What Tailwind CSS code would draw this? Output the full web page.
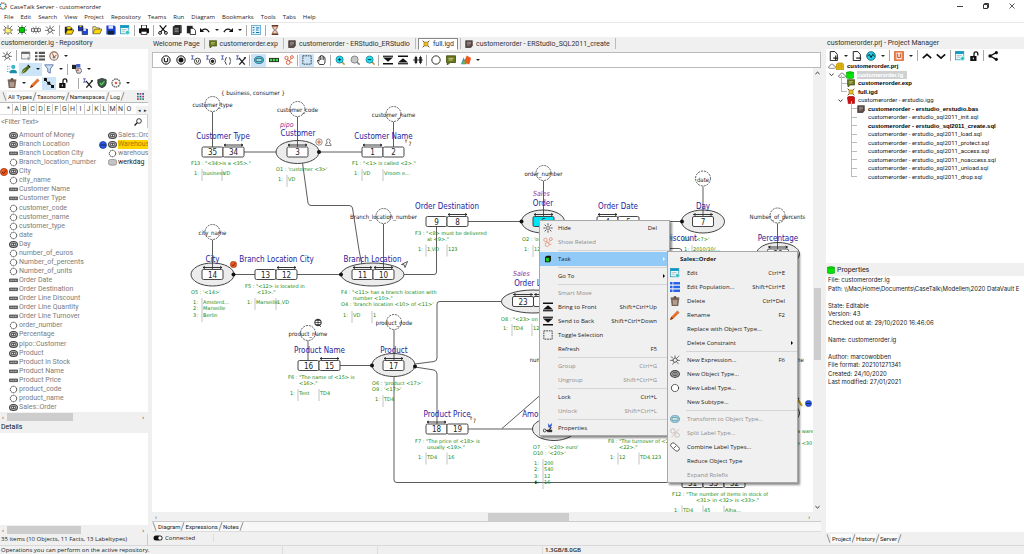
<!DOCTYPE html>
<html lang="en">
<head>
    <meta charset="UTF-8">
    <title>CaseTalk Server - customerorder</title>
    <script src="https://cdn.jsdelivr.net/npm/@tailwindcss/browser@4"></script>
</head>
<body class="h-screen flex flex-col overflow-hidden bg-[#f0f0f0] text-[#222] text-[6px] leading-[8px] font-['Open_Sans',sans-serif] whitespace-nowrap">

    <!-- icon sprite -->
    <svg class="hidden">
        <symbol id="burst" viewBox="0 0 12 12"><path d="M6 .5v2.5M6 9v2.5M.5 6H3M9 6h2.5M2 2l2 2M8 8l2 2M10 2L8 4M4 8l-2 2" stroke="#333" stroke-width="1" fill="none"/><circle cx="6" cy="6" r="1.8" fill="none" stroke="#333" stroke-width=".7"/></symbol>
        <symbol id="newfile" viewBox="0 0 12 12"><path d="M1 1l10 10M11 1L1 11M6 0v12M0 6h12" stroke="#333" stroke-width=".8"/><path d="M2.5 3.5h3l1 1h3v5h-7z" fill="#fff27a" stroke="#555" stroke-width=".7"/></symbol>
        <symbol id="newig" viewBox="0 0 12 12"><path d="M1 1l10 10M11 1L1 11M6 0v12M0 6h12" stroke="#333" stroke-width=".8"/><rect x="3" y="3" width="6" height="6" rx="1.5" fill="#0c0" stroke="#060"/></symbol>
        <symbol id="newfact" viewBox="0 0 12 12"><path d="M2 2l8 8M10 2l-8 8M6 1v10" stroke="#666" stroke-width=".7"/><rect x=".5" y="4.5" width="11" height="3" fill="#fff" stroke="#333" stroke-width=".8"/><path d="M4 4.500v3M8 4.500v3" stroke="#333"/></symbol>
        <symbol id="flash" viewBox="0 0 12 12"><path d="M4 4l-3-2M6 3.500V.5M8 4l3-3M8.500 6.500H12M8 8l2 3M5 8.500L3 11.500M3.500 6.500H0" stroke="#555" stroke-width=".9"/><rect x="3.500" y="4" width="5" height="4.500" rx="2" fill="#eee" stroke="#333" transform="rotate(-35 6 6)"/></symbol>
        <symbol id="openprj" viewBox="0 0 12 12"><path d="M1 2h4l1 1.500h4V10H1z" fill="#222"/><path d="M1.500 11L4 6h8l-2.500 5z" fill="#ffd800" stroke="#222" stroke-width=".8"/><ellipse cx="6" cy="3.500" rx="3" ry="1.800" fill="#ffd800" stroke="#222" stroke-width=".6"/></symbol>
        <symbol id="saveall" viewBox="0 0 12 12"><path d="M0 1h6v6H0z" fill="#1d36b8" stroke="#111" stroke-width=".6"/><path d="M5 5h6.500v6.500H5z" fill="#2347d8" stroke="#111" stroke-width=".7"/><path d="M6.500 5h3v2h-3z" fill="#fff"/><path d="M2 1h2v1.500H2z" fill="#ffd800"/></symbol>
        <symbol id="folder" viewBox="0 0 12 12"><path d="M1 10V2h3.500l1 1.500H9V5" fill="#ffea60" stroke="#444" stroke-width=".8"/><path d="M1 10.500L3.500 5H12l-2.500 5.500z" fill="#ffd800" stroke="#444" stroke-width=".8"/></symbol>
        <symbol id="save" viewBox="0 0 12 12"><path d="M.5 .5h9.500L11.500 2v9.500H.5z" fill="#1a3fd0"/><path d="M3 .5h5.500v4H3z" fill="#dce6ff"/><path d="M2.500 7h7v4.500h-7z" fill="#123"/></symbol>
        <symbol id="form" viewBox="0 0 12 12"><rect x=".5" y=".5" width="10" height="10" fill="#e8fbfb" stroke="#3a9fc0"/><path d="M.5 .5h10v3H.5z" fill="#0f96c5"/><path d="M2 5.500h6M2 7.500h4" stroke="#999" stroke-width=".7"/><circle cx="9" cy="9" r="2.500" fill="#2cc5c5" stroke="#fff" stroke-width=".6"/></symbol>
        <symbol id="print" viewBox="0 0 12 12"><path d="M3 0h6v5H3z" fill="#fff" stroke="#111"/><rect x="0" y="4" width="12" height="6" rx="1" fill="#111"/><path d="M2.500 7.500h7v4h-7z" fill="#fff" stroke="#111"/></symbol>
        <symbol id="cut" viewBox="0 0 12 12"><path d="M2 .5l7 8M10 .5l-7 8" stroke="#111" stroke-width="1.500"/><circle cx="2.500" cy="9.500" r="1.700" fill="none" stroke="#111" stroke-width="1.200"/><circle cx="9.500" cy="9.500" r="1.700" fill="none" stroke="#111" stroke-width="1.200"/></symbol>
        <symbol id="copy" viewBox="0 0 12 12"><path d="M3.500 .5H11v9H3.500z" fill="#555" stroke="#111"/><path d="M1.500 2H9v9.500H1.500z" fill="#333" stroke="#111"/><path d="M3 4h5M3 6h5M3 8h5" stroke="#bbb" stroke-width=".8"/></symbol>
        <symbol id="paste" viewBox="0 0 12 12"><path d="M1 1h7v9H1z" fill="#222"/><path d="M5 4h4l2.500 2.500v5H5z" fill="#fff" stroke="#111"/></symbol>
        <symbol id="undo" viewBox="0 0 12 12"><path d="M2.500 6.500Q7 2.500 11 8.500" fill="none" stroke="#111" stroke-width="1.500"/><path d="M0 3.500v5h5z" fill="#111"/></symbol>
        <symbol id="redo" viewBox="0 0 12 12"><path d="M9.500 6.500Q5 2.500 1 8.500" fill="none" stroke="#111" stroke-width="1.500"/><path d="M12 3.500v5H7z" fill="#111"/></symbol>
        <symbol id="options" viewBox="0 0 12 12"><rect x=".5" y=".5" width="11" height="11" fill="#dff3ff" stroke="#5aa7d4"/><path d="M2 3h2M2 6h2M2 9h2M6 3.500h4M6 6h3M6 9h4" stroke="#1573a8" stroke-width="1.200"/></symbol>
        <symbol id="hourglass" viewBox="0 0 12 12"><path d="M2 .7h8M2 11.300h8" stroke="#6b3a25" stroke-width="1.400"/><path d="M3 1.500h6Q9 4 6.500 6Q9 8 9 10.500H3Q3 8 5.500 6Q3 4 3 1.500z" fill="#e8cdbd" stroke="#6b3a25" stroke-width=".9"/></symbol>
        <symbol id="list" viewBox="0 0 12 12"><path d="M0 1h3v2.500H0zM0 5h3v2.500H0zM0 9h3v2.500H0zM4.500 1H12v2.500H4.500zM4.500 5H12v2.500H4.500zM4.500 9H12v2.500H4.500z" fill="#555"/></symbol>
        <symbol id="bluelist" viewBox="0 0 12 12"><path d="M0 0h3v3H0zM0 4.500h3v3H0zM0 9h3v3H0zM4 0h8v3H4zM4 4.500h8v3H4zM4 9h8v3H4z" fill="#2463ea"/></symbol>
        <symbol id="window" viewBox="0 0 12 12"><path d="M.5 1.500h10v8H.5z" fill="#f4f4f4" stroke="#777"/><path d="M.5 1h10v2.500H.5z" fill="#666"/><circle cx="9" cy="9" r="2.200" fill="#999" stroke="#fff" stroke-width=".6"/></symbol>
        <symbol id="gauge" viewBox="0 0 12 12"><circle cx="6" cy="6" r="5" fill="#f7efe8" stroke="#8a6a58" stroke-width="1.300"/><path d="M6 7L4 3M6 7l3-2" stroke="#c0431c" stroke-width="1.200"/><circle cx="6" cy="7.500" r="1.500" fill="#777"/></symbol>
        <symbol id="people" viewBox="0 0 12 12"><circle cx="7.500" cy="3.500" r="2.500" fill="#37b8c8"/><path d="M3 11q0-4 4.500-4T12 11z" fill="#188fa8"/><path d="M0 3h4M0 6h4M0 9h3" stroke="#2a7fc0" stroke-dasharray="1 1"/></symbol>
        <symbol id="pen" viewBox="0 0 12 12"><path d="M0 12L2 6.500 9 1.500 11 4 5.500 10z" fill="#4d6b14"/><path d="M0 12l5-5.500" stroke="#fff" stroke-width=".7"/><path d="M8 1l3 3" stroke="#222" stroke-width="1.500"/></symbol>
        <symbol id="filter" viewBox="0 0 12 12"><path d="M.8 1h10.400L7.500 6v5l-3-1.500V6z" fill="#cfe0f7" stroke="#4a6c9c"/></symbol>
        <symbol id="tagcopy" viewBox="0 0 12 12"><path d="M0 1h5v5H0z" fill="#222"/><path d="M5 0h5v4H5z" fill="#4762c8"/><path d="M4 5h6l2 3-2 3H6z" fill="#ddd" stroke="#333" stroke-width=".8"/><circle cx="7" cy="7.500" r="1.300" fill="#d55"/></symbol>
        <symbol id="trash" viewBox="0 0 12 12"><path d="M1.500 3.500h9l-1 8.500h-7z" fill="#8a7263" stroke="#584638" stroke-width=".7"/><path d="M.8 2.500h10.400M4.500 1h3" stroke="#584638" stroke-width="1.300"/><path d="M4.500 5v5.500M6 5v5.500M7.500 5v5.500" stroke="#e7dcd3" stroke-width=".7"/></symbol>
        <symbol id="pencil" viewBox="0 0 12 12"><path d="M0 12l1.500-4L9 .5 11.500 3 4 10.500z" fill="#e2722b"/><path d="M0 12l1.500-4L4 10.500z" fill="#7a3a12"/><path d="M8 1.500L10.500 4" stroke="#9c9c9c"/></symbol>
        <symbol id="link" viewBox="0 0 12 12"><path d="M1 2l4 4 6 4" stroke="#111" stroke-width="1.200" fill="none"/><path d="M0 0h3.500v3.500H0zM4 4.500h3.500V8H4zM8.500 8.500H12V12H8.500z" fill="#111"/></symbol>
        <symbol id="lock" viewBox="0 0 12 12"><path d="M1.500 6h7.500v6H1.500z" fill="#111"/><path d="M6 6V3.500Q6 1 8.300 1T10.600 3.500V5.500" fill="none" stroke="#111" stroke-width="1.500"/><path d="M5.200 8v2" stroke="#fff" stroke-width="1.200"/></symbol>
        <symbol id="xtool" viewBox="0 0 12 12"><path d="M0 1h3.500M1.700 1v4M0 5h3.500" stroke="#3a48a0" stroke-width=".9"/><path d="M3.500 3.500l7 8M11 3.500l-7 8" stroke="#222" stroke-width="1.600"/><path d="M9.500 3h2.500v2" stroke="#222" fill="none"/></symbol>
        <symbol id="shield" viewBox="0 0 12 12"><path d="M6 .5l5 1.500v4Q11 10 6 11.800Q1 10 1 6V2z" fill="#3c5a48" stroke="#333"/><path d="M3.500 6l2 2 3.500-4" stroke="#5ae05a" fill="none" stroke-width="1.300"/></symbol>
        <symbol id="gear" viewBox="0 0 12 12"><circle cx="6" cy="6" r="4.800" fill="#fff" stroke="#666" stroke-width="1.600" stroke-dasharray="2 .8"/><circle cx="6" cy="6" r="1.600" fill="#e06030"/></symbol>
        <symbol id="grid" viewBox="0 0 12 12"><path d="M0 0h3v3H0zM4.500 4.500h3v3h-3zM9 0h3v3H9z" fill="#285b8c"/><path d="M4.500 0h3v3h-3zM0 9h3v3H0zM9 4.500h3v3H9z" fill="#b33a6c"/><path d="M0 4.500h3v3H0zM4.500 9h3v3h-3zM9 9h3v3H9z" fill="#2a8a70"/></symbol>
        <symbol id="search" viewBox="0 0 12 12"><circle cx="7.500" cy="4.500" r="3.500" fill="#fff" stroke="#111" stroke-width="1.200"/><path d="M5 7L.8 11.200" stroke="#111" stroke-width="1.900"/></symbol>
        <symbol id="uring" viewBox="0 0 12 12"><circle cx="6" cy="6" r="5" fill="#fff" stroke="#111" stroke-width="1.200"/><path d="M4 3.500v3.500q2 2.500 4 0V3.500" fill="none" stroke="#111" stroke-width="1.300"/></symbol>
        <symbol id="dotring" viewBox="0 0 12 12"><circle cx="6" cy="6" r="5" fill="#fff" stroke="#111" stroke-width="1.200"/><circle cx="6" cy="6" r="3" fill="#111"/></symbol>
        <symbol id="tu" viewBox="0 0 12 12"><path d="M0 1h3.500M1.700 1v4M0 5h3.500" stroke="#3a48a0" stroke-width=".9"/><circle cx="7.800" cy="7.500" r="3.700" fill="#fff" stroke="#222"/><path d="M6.500 5.800v2.400q1.300 1.500 2.600 0V5.800" fill="none" stroke="#222"/></symbol>
        <symbol id="tdot" viewBox="0 0 12 12"><path d="M0 1h3.500M1.700 1v4M0 5h3.500" stroke="#3a48a0" stroke-width=".9"/><circle cx="7.800" cy="7.500" r="3.700" fill="#fff" stroke="#222"/><circle cx="7.800" cy="7.500" r="2" fill="#222"/></symbol>
        <symbol id="tbrace" viewBox="0 0 12 12"><path d="M0 1h3.500M1.700 1v4M0 5h3.500" stroke="#3a48a0" stroke-width=".9"/><path d="M7 3q-1.500 0-1.500 2t-1.200 2.500Q5.500 8 5.500 9.500T7 11.500M9.500 3Q11 3 11 5t1 2.500Q11 8 11 9.500t-1.500 2" fill="none" stroke="#222"/></symbol>
        <symbol id="objtype" viewBox="0 0 12 12"><ellipse cx="6" cy="6" rx="5.500" ry="4.200" fill="#5ac4dc" stroke="#2a6d90"/><path d="M2.500 4.300h7v3.400h-7z" fill="#9fe9f5" stroke="#244" stroke-width=".8"/></symbol>
        <symbol id="roles" viewBox="0 0 12 12"><path d="M0 3.500h12v5H0z" fill="#222"/><path d="M1 4.500h2.800v3H1zM4.600 4.500h2.800v3H4.600zM8.200 4.500H11v3H8.200z" fill="#4ad04a"/></symbol>
        <symbol id="related" viewBox="0 0 12 12"><path d="M3.500 4L6 7.500l3-4M6 8l4 1" stroke="#d44a24" stroke-width=".9" fill="none"/><circle cx="3" cy="3.500" r="2" fill="#fff" stroke="#d44a24"/><circle cx="9.500" cy="2.500" r="1.700" fill="#fff" stroke="#d44a24"/><circle cx="5" cy="9" r="2.300" fill="#fff" stroke="#d44a24"/></symbol>
        <symbol id="select" viewBox="0 0 12 12"><path d="M1 1h10v10H1z" fill="none" stroke="#222" stroke-dasharray="2 1"/></symbol>
        <symbol id="hand" viewBox="0 0 12 12"><path d="M3 11.500Q.5 8 .5 6.500q1-.8 2 1V2.500q.9-1 1.700 0V1q1-1 1.800 0V1.500q1-1 1.900 0v1.500q1-.8 1.700.2V8q0 2-1.500 3.500z" fill="#fff" stroke="#111"/><path d="M4.200 3v3M6 2v4M7.900 3v3" stroke="#111" stroke-width=".8"/></symbol>
        <symbol id="zoomin" viewBox="0 0 12 12"><path d="M8 8l3.500 3.500" stroke="#c08a30" stroke-width="1.800"/><circle cx="5.500" cy="5.500" r="4.300" fill="#22dcee" stroke="#1a8a9c"/><path d="M3.500 5.500h4M5.500 3.500v4" stroke="#123"/></symbol>
        <symbol id="zoomfit" viewBox="0 0 12 12"><path d="M8 8l3.500 3.500" stroke="#777" stroke-width="1.800"/><circle cx="5.500" cy="5.500" r="4.300" fill="#c6c6c6" stroke="#777"/></symbol>
        <symbol id="zoomout" viewBox="0 0 12 12"><path d="M8 8l3.500 3.500" stroke="#c08a30" stroke-width="1.800"/><circle cx="5.500" cy="5.500" r="4.300" fill="#22dcee" stroke="#1a8a9c"/><path d="M3.500 5.500h4" stroke="#123"/></symbol>
        <symbol id="back" viewBox="0 0 12 12"><path d="M0 1.500h12" stroke="#111" stroke-width="1.400"/><path d="M0 3h12L6 8z" fill="#111"/><path d="M0 10.500h12" stroke="#111" stroke-width="1.800"/></symbol>
        <symbol id="front" viewBox="0 0 12 12"><path d="M0 1.500h12" stroke="#111" stroke-width="1.800"/><path d="M0 9h12L6 4z" fill="#111"/><path d="M0 10.500h12" stroke="#111" stroke-width="1.400"/></symbol>
        <symbol id="align" viewBox="0 0 12 12"><path d="M2 2.500h3v7H2zM7.500 2.500h3v7h-3z" fill="#222"/><path d="M0 6h12M3.500 1v10M9 1v10" stroke="#222"/></symbol>
        <symbol id="ring" viewBox="0 0 12 12"><circle cx="6" cy="6" r="5" fill="#fff" stroke="#222" stroke-width="1.100"/></symbol>
        <symbol id="dashring" viewBox="0 0 12 12"><circle cx="6" cy="6" r="4.300" fill="#fff" stroke="#222" stroke-width="1.200" stroke-dasharray="2 .7"/></symbol>
        <symbol id="note" viewBox="0 0 12 12"><path d="M.5 1h11v8H5l-3.500 3V9h-1z" fill="#66751f" stroke="#444d10"/><path d="M3 4h6M3 6h5" stroke="#d8e08a"/></symbol>
        <symbol id="shapes" viewBox="0 0 12 12"><path d="M0 11L3 3l4 8z" fill="#2b9ad0"/><path d="M3 9l4-8.500 5 3-2 8z" fill="#ef5a1c"/><circle cx="3.500" cy="9" r="2" fill="#6bb04a"/></symbol>
        <symbol id="script" viewBox="0 0 12 12"><path d="M1 1h10v8l-2.500 2.500H1z" fill="#5b4a46" stroke="#3f3330"/><path d="M3 3.500h6M3 5.500h6M3 7.500h4" stroke="#c9bcb8" stroke-width=".8"/></symbol>
        <symbol id="igd" viewBox="0 0 12 12"><path d="M1 1l10 10M11 1L1 11" stroke="#6e5a10" stroke-width="1.500"/><path d="M3 3h6v6H3z" fill="#f0c020" stroke="#665510" stroke-width=".7"/></symbol>
        <symbol id="app" viewBox="0 0 12 12"><circle cx="6" cy="6" r="4.500" fill="none" stroke="#c8452c" stroke-width="2.500" stroke-dasharray="2 7"/><circle cx="6" cy="6" r="4.500" fill="none" stroke="#2b7fc0" stroke-width="2.500" stroke-dasharray="2 7" stroke-dashoffset="3"/><circle cx="6" cy="6" r="4.500" fill="none" stroke="#4aa04a" stroke-width="2.500" stroke-dasharray="2 7" stroke-dashoffset="6"/></symbol>
        <symbol id="obj" viewBox="0 0 12 12"><ellipse cx="6" cy="6" rx="5.300" ry="4" fill="#bbb" stroke="#444" stroke-width="1.400"/><path d="M3.500 4.500h5v3h-5z" fill="#eee" stroke="#333"/><path d="M6 4.500v3" stroke="#333"/></symbol>
        <symbol id="fact" viewBox="0 0 12 12"><path d="M.5 4h11v3.500H.5z" fill="#666" stroke="#444"/><path d="M2 5.700h2M5 5.700h2M8 5.700h2" stroke="#ddd"/></symbol>
        <symbol id="pill" viewBox="0 0 12 12"><rect x=".5" y="2" width="11" height="7.500" rx="3" fill="#c4c4c4" stroke="#888"/></symbol>
        <symbol id="checkball" viewBox="0 0 12 12"><circle cx="6" cy="6" r="5.500" fill="#f2551c" stroke="#7a3010" stroke-width=".8"/><path d="M3 6l2.300 2.500L9 3.500" stroke="#5a1c00" stroke-width="1.300" fill="none"/></symbol>
        <symbol id="blueball" viewBox="0 0 12 12"><circle cx="6" cy="6" r="5.300" fill="#2858e8" stroke="#15308a"/><path d="M2 6h8" stroke="#123" stroke-width="1.400"/></symbol>
        <symbol id="docadd" viewBox="0 0 12 12"><path d="M1.500 .7H7L10 4v7.500H1.500z" fill="#fff" stroke="#222" stroke-width="1.200"/><path d="M5 8.500h6M8 5.500v6" stroke="#222" stroke-width="1.300"/></symbol>
        <symbol id="docdel" viewBox="0 0 12 12"><path d="M1.500 .7H7L10 4v7.500H1.500z" fill="#fff" stroke="#222" stroke-width="1.200"/><path d="M5 8.500h6" stroke="#222" stroke-width="1.500"/></symbol>
        <symbol id="sync" viewBox="0 0 12 12"><circle cx="6" cy="6" r="5.200" fill="#22cbe0" stroke="#0b6478"/><path d="M1.500 6.500L4 4l2 4 2-4 2.500 2.500" fill="none" stroke="#123" stroke-width="1.200"/></symbol>
        <symbol id="ubox" viewBox="0 0 12 12"><path d="M.5 .5h11v11H.5z" fill="#f08050" stroke="#d8672f"/><path d="M3 2h6v8H3z" fill="#fff"/><path d="M4.500 3v5M7.500 3v5M4.500 8h3" stroke="#b3431c" stroke-width="1.200"/></symbol>
        <symbol id="up" viewBox="0 0 12 12"><path d="M1 8.500L6 4l5 4.500" fill="none" stroke="#111" stroke-width="2"/></symbol>
        <symbol id="down" viewBox="0 0 12 12"><path d="M1 4l5 4.500L11 4" fill="none" stroke="#111" stroke-width="2"/></symbol>
        <symbol id="share" viewBox="0 0 12 12"><path d="M10 2L2.500 6l7.500 4" fill="none" stroke="#111" stroke-width="1.500"/><circle cx="10" cy="2" r="1.900" fill="#111"/><circle cx="2.500" cy="6" r="2.100" fill="#111"/><circle cx="10" cy="10" r="1.900" fill="#111"/></symbol>
        <symbol id="cloud" viewBox="0 0 12 12"><path d="M3 9.500Q.5 9.500.7 7.700T3 6Q3.500 3 6 3t3 3q2.500 0 2.500 1.800T9.500 9.500z" fill="#fff" stroke="#555"/></symbol>
        <symbol id="prj" viewBox="0 0 12 12"><path d="M0 4Q3 0 6 1.500 10 0 12 4v7.500H0z" fill="#e8bc10" stroke="#8a6d00" stroke-width=".7"/><path d="M1 5h10M1 8h10M4 2v9M8 2v9" stroke="#b58f00" stroke-width=".6"/></symbol>
        <symbol id="greendb" viewBox="0 0 12 12"><path d="M.5 2Q6-.5 11.500 2v8.500Q6 12.500.5 10.500z" fill="#00e600" stroke="#0a8a0a" stroke-width=".8"/><path d="M.5 2.500q5.500 2.300 11 0" fill="none" stroke="#0a8a0a" stroke-width=".7"/></symbol>
        <symbol id="reddb" viewBox="0 0 12 12"><path d="M.5 2L3 .5h6L11.500 2v9L9 11.800H2z" fill="#d01010" stroke="#8a0a0a" stroke-width=".8"/></symbol>
        <symbol id="cube" viewBox="0 0 12 12"><path d="M2.500 3.500L4.500 2h5v6L8 10H2.500z" fill="#111"/><path d="M3.500 4.500h4v4.500h-4z" fill="#14c814"/></symbol>
        <symbol id="props" viewBox="0 0 12 12"><path d="M6 0l2 3 2.500-3v3L8.500 5.500h-2z" fill="#2450d8"/><path d="M0 9h7l3-4" stroke="#222" stroke-width="1.300" fill="none"/><circle cx="2" cy="9" r="1.700" fill="#fff" stroke="#222"/><path d="M5 8h6v3H5z" fill="#333"/></symbol>
        <symbol id="split" viewBox="0 0 12 12"><circle cx="3.500" cy="3.500" r="2.700" fill="none" stroke="#999"/><circle cx="8.500" cy="8.500" r="2.700" fill="none" stroke="#999"/><path d="M2 11L10.500 1.500" stroke="#e08a70"/></symbol>
        <symbol id="combine" viewBox="0 0 12 12"><rect x="0" y="3.200" width="12" height="5.600" rx="2.800" transform="rotate(42 6 6)" fill="#fff" stroke="#444"/><path d="M4.500 7.500l3-3" stroke="#444"/></symbol>
        <symbol id="toggle" viewBox="0 0 20 12"><rect x="1" y="1" width="18" height="10" rx="5" fill="#111"/><circle cx="14" cy="6" r="3.500" fill="#fff"/></symbol>
    </svg>

    <!-- title bar -->
    <header class="bg-white">
        <div class="flex items-center h-3">
            <svg class="size-2 -ml-px"><use href="#app"/></svg>
            <h1 class="pl-[3px] flex-1 pt-px">CaseTalk Server - customerorder</h1>
            <div class="flex gap-[10px] pr-1">
                <button aria-label="Minimize" class="w-4 h-3 grid place-items-center"><span class="w-[6px] h-px bg-[#444]"></span></button>
                <button aria-label="Restore" class="w-4 h-3 grid place-items-center"><svg class="size-[6px]" viewBox="0 0 6 6"><path d="M.5 1.500h4v4h-4zM1.500 1.500v-1h4v4h-1" fill="none" stroke="#333"/></svg></button>
                <button aria-label="Close" class="w-4 h-3 grid place-items-center"><svg class="size-[6px]" viewBox="0 0 6 6"><path d="M.5 .5l5 5M5.500 .5l-5 5" stroke="#333" stroke-width=".8"/></svg></button>
            </div>
        </div>
        <nav id="menubar" class="flex items-center gap-[7px] pl-1 h-[11px] border-b border-[#e8e8e8]"></nav>
        <div id="main-toolbar" class="flex items-center h-[14px] pl-px"></div>
    </header>

    <main class="flex-1 min-h-0 grid grid-cols-[148px_minmax(0,1fr)_199px] gap-x-1">

        <!-- repository -->
        <section class="flex flex-col min-h-0 min-w-0 font-[Roboto,sans-serif]">
            <h2 class="text-[7px] leading-[12px] h-3 pl-px text-[#333]">customerorder.ig - Repository</h2>
            <div class="bg-white">
                <div id="repo-bar1" class="flex items-center h-[13px]"></div>
                <div id="repo-bar2" class="flex items-center h-[14px] pl-[5px]"></div>
                <div id="repo-bar3" class="flex items-center h-[14px] pl-[5px]"></div>
            </div>
            <div class="flex items-center h-3 pl-[2px]">
                <div class="slant-tabs flex flex-1 items-center" data-tabs="All Types,Taxonomy,Namespaces,Log"></div>
                <button aria-label="Columns" class="p-[2px] mr-[2px]"><svg class="size-[7px]"><use href="#grid"/></svg></button>
            </div>
            <div class="flex items-end h-3 pl-[5px] bg-white border-t border-[#bbb]">
                <div id="letters" class="flex flex-1 divide-x divide-[#ccc]"></div>
                <button aria-label="Previous letters" class="w-[6px] bg-[#f0f0f0] text-[5px]">◂</button>
                <button aria-label="Next letters" class="w-[6px] bg-[#f0f0f0] text-[5px]">▸</button>
            </div>
            <div class="flex items-center h-[14px] bg-white border-t border-[#ddd]">
                <input type="text" aria-label="Filter" placeholder="&lt;Filter Text&gt;" class="flex-1 min-w-0 pl-px text-[7px] placeholder:text-[#777] outline-none">
                <button aria-label="Search" class="w-5 h-[13px] grid place-items-center border-r border-[#ccc]"><svg class="size-2"><use href="#search"/></svg></button>
            </div>
            <div id="types" class="bg-white grid grid-flow-col grid-rows-[repeat(31,1fr)] grid-cols-[99px_minmax(0,1fr)] h-[284px] pt-[3px] text-[7px] leading-[9px] text-[#7c7c7c] overflow-hidden"></div>
            <div class="flex items-center h-[9px] px-[2px] gap-[3px] text-[6px]"><span>‹</span><span class="w-[66px] h-2 bg-[#cdcdcd]"></span><span class="ml-auto pr-[2px]">›</span></div>
            <h2 class="h-3 leading-[13px] pl-px text-[7px] text-[#111]">Details</h2>
            <div class="bg-white flex-1"></div>
            <div class="flex items-center h-[9px] px-[2px] gap-[3px] text-[6px]"><span>‹</span><span class="w-[74px] h-2 bg-[#cdcdcd]"></span><span class="ml-auto pr-[2px]">›</span></div>
            <p class="h-[11px] leading-[11px] pl-px font-['Open_Sans',sans-serif] border-r border-[#ccc]">35 items (10 Objects, 11 Facts, 13 Labeltypes)</p>
        </section>

        <!-- diagram editor -->
        <section class="flex flex-col min-h-0 min-w-0">
            <div id="doc-tabs" class="flex items-center h-[15px] pb-[2px] text-[7px] font-[Roboto,sans-serif] text-[#333]"></div>
            <div id="diagram-bar" class="flex items-center h-4 pl-[5px] bg-white border border-[#bbb]"></div>
            <div class="flex-1 min-h-0 flex">
                <div class="relative flex-1 min-w-0 bg-white overflow-hidden">
                    <svg class="size-full font-['DejaVu_Sans_Condensed','Open_Sans',sans-serif]" role="img" aria-label="Customer order information grammar"><g id="diagram" transform="translate(-152 -68)"></g></svg>
                    <div id="context-menu" role="menu" class="absolute left-[387px] top-[152px] w-[131px] bg-[#f0f0f0] border border-[#a8a8a8] shadow-[2px_2px_2px_rgba(0,0,0,0.45)]"></div>
                    <div id="task-menu" role="menu" class="absolute left-[515px] top-[183px] w-[131px] bg-[#f0f0f0] border border-[#a8a8a8] shadow-[2px_2px_2px_rgba(0,0,0,0.45)]"></div>
                </div>
                <div class="w-2 flex flex-col items-center py-[2px]">
                    <svg class="w-[5px] h-[6px]" viewBox="0 0 12 12"><use href="#up"/></svg>
                    <span class="flex-1 flex items-center pt-[68px]"><span class="w-[7px] h-[72px] bg-[#cdcdcd]"></span></span>
                    <svg class="w-[5px] h-[6px]" viewBox="0 0 12 12"><use href="#down"/></svg>
                </div>
            </div>
            <div class="flex items-center h-[9px] pl-[3px] pr-[11px]"><span>‹</span><span class="flex-1 flex justify-center pl-[91px]"><span class="w-[81px] h-2 bg-[#cdcdcd]"></span></span><span>›</span></div>
            <div class="slant-tabs flex items-center h-[10px] border-t border-[#ccc] bg-[#f7f7f7] font-[Roboto,sans-serif]" data-tabs="Diagram,Expressions,Notes"></div>
            <div class="flex items-center h-[14px] pb-[2px] border-t border-[#ddd]">
                <svg class="w-[10px] h-[6px] ml-px"><use href="#toggle"/></svg>
                <span class="pl-[2px] w-[51px] border-r border-[#ddd]">Connected</span>
            </div>
        </section>

        <!-- project manager -->
        <section class="flex flex-col min-h-0 min-w-0 font-[Roboto,sans-serif] pl-px">
            <h2 class="text-[7px] leading-[12px] h-3 pl-px text-[#333]">customerorder.prj - Project Manager</h2>
            <div id="project-bar" class="flex items-center h-[13px] pl-px bg-white"></div>
            <div class="bg-white h-[201px]"><div id="tree" class="grid auto-rows-fr h-[119px] text-[#222]"></div></div>
            <h2 class="flex items-center gap-[2px] h-[13px] pl-px text-[7px]"><svg class="size-2"><use href="#greendb"/></svg>Properties</h2>
            <div class="bg-white flex-1 pl-[2px] overflow-hidden">
                <div id="props-list" class="grid auto-rows-fr h-[111px] font-[Inter,sans-serif]"></div>
            </div>
            <div class="slant-tabs flex items-center h-[13px]" data-tabs="Project,History,Server"></div>
        </section>
    </main>

    <footer class="flex items-center h-[9px] border-t border-[#d8d8d8]">
        <span class="w-[283px] pl-px border-r border-[#ddd]">Operations you can perform on the active repository.</span>
        <span class="w-[95px] border-r border-[#ddd]">&nbsp;</span>
        <span class="w-[165px] border-r border-[#ddd]">&nbsp;</span>
        <span class="pl-[2px] font-semibold">1.3GB/8.0GB</span>
    </footer>

    <script>
    const byId = id => document.getElementById(id);
    const esc = s => s.replace(/&/g, '&amp;').replace(/</g, '&lt;').replace(/>/g, '&gt;');

    // toolbars: "|" separator, "v" drop-down arrow, "*name" pressed button
    function toolbar(id, spec, width = 'w-[14px]', gap = 'mx-[2px]') {
        byId(id).innerHTML = spec.split(' ').map(name => {
            if (name === '|') return `<span class="w-px h-[11px] ${gap} bg-[#aaa]"></span>`;
            if (name === '_') return '<span class="w-[6px]"></span>';
            const on = name[0] === '*' ? 'bg-[#cce4f7]' : '';
            name = name.replace('*', '');
            if (name === 'v') return `<button aria-label="More" class="w-[9px] h-[13px] grid place-items-center ${on}"><span class="border-x-2 border-x-transparent border-t-2 border-t-[#222]"></span></button>`;
            return `<button aria-label="${name}" class="${width} h-[13px] grid place-items-center ${on}"><svg class="size-[10px]"><use href="#${name}"/></svg></button>`;
        }).join('');
    }
    toolbar('main-toolbar', 'newfile newig newfact flash | openprj saveall folder save form | print | cut copy paste undo v redo v | options | hourglass');
    toolbar('repo-bar1', 'flash | window list gauge v');
    toolbar('repo-bar2', 'people *pen *v filter v | tagcopy v');
    toolbar('repo-bar3', 'trash v pencil *link lock _ | xtool shield gear v');
    toolbar('diagram-bar', 'uring dotring tu tdot tbrace xtool | *objtype roles related | *select hand | zoomin zoomfit zoomout | back front align | ring note shapes v', 'w-[15px]', 'mx-px');
    toolbar('project-bar', 'docadd v docdel sync v | ubox v | up down | form lock | share');

    byId('menubar').innerHTML = ['File', 'Edit', 'Search', 'View', 'Project', 'Repository', 'Teams', 'Run', 'Diagram', 'Bookmarks', 'Tools', 'Tabs', 'Help']
        .map(m => `<button>${m}</button>`).join('');

    byId('letters').innerHTML = [...'*ABCDEFGHIJKLMNO']
        .map(l => `<button class="w-2 h-[10px] text-[7px] leading-[10px] text-[#444]">${l}</button>`).join('');

    document.querySelectorAll('.slant-tabs').forEach(el => {
        el.innerHTML = '<span class="w-px h-[9px] mx-[2px] bg-[#999] -rotate-20"></span>' + el.dataset.tabs.split(',')
            .map(t => `<button class="text-[6px] leading-[9px] px-px bg-[#fbfbfb]">${t}</button><span class="w-px h-[9px] mx-[1px] bg-[#999] rotate-20"></span>`).join('');
    });

    byId('doc-tabs').innerHTML = [
        ['', 'Welcome Page'], ['note', 'customerorder.exp'], ['script', 'customerorder - ERStudio_ERStudio'],
        ['igd', 'full.igd'], ['script', 'customerorder - ERStudio_SQL2011_create']
    ].map(([icon, name]) => {
        const box = name === 'full.igd' ? 'bg-white border border-[#888] border-b-white px-[3px] mx-[2px]' : 'pl-1 pr-[5px]';
        const svg = icon ? `<svg class="size-2"><use href="#${icon}"/></svg>` : '';
        return `<button class="flex items-center gap-[3px] h-3 ${icon ? box : 'pl-px pr-1'}">${svg}${name}</button><span class="w-px h-[11px] bg-[#bbb]"></span>`;
    }).join('');

    // repository types: o object, f fact, l label, p pill
    const types = [
        'o Amount of Money', 'o Branch Location', 'f Branch Location City', 'l Branch_location_number', 'o City', 'l city_name',
        'f Customer Name', 'f Customer Type', 'l customer_code', 'l customer_name', 'l customer_type', 'l date', 'o Day',
        'l number_of_euros', 'l Number_of_percents', 'l Number_of_units', 'f Order Date', 'f Order Destination',
        'f Order Line Discount', 'f Order Line Quantity', 'f Order Line Turnover', 'l order_number', 'o Percentage',
        'o pipo::Customer', 'o Product', 'f Product in Stock', 'f Product Name', 'f Product Price', 'l product_code',
        'l product_name', 'o Sales::Order', 'o Sales::Order Line', 'o Warehouse', 'l warehouse_code', 'p werkdag'
    ];
    const typeIcons = { o: 'obj', f: 'fact', l: 'dashring', p: 'pill' };
    byId('types').innerHTML = types.map(t => {
        const name = t.slice(2);
        const badge = { City: 'checkball', Warehouse: 'blueball' }[name];
        const look = { Warehouse: 'bg-[#ffd400] text-[#a07800]', werkdag: 'text-[#222]' }[name] || '';
        return `<div class="flex items-center min-w-0"><span class="w-[9px] shrink-0">${badge ? `<svg class="size-2"><use href="#${badge}"/></svg>` : ''}</span>`
            + `<svg class="size-[9px] shrink-0"><use href="#${typeIcons[t[0]]}"/></svg><span class="ml-px ${look}">${name}</span></div>`;
    }).join('');

    // project tree: depth, icon, label, bold
    const tree = [
        [0, 'prj', 'customerorder.prj', 1], [1, 'greendb', 'customerorder.ig', 2], [2, 'note', 'customerorder.exp', 1], [2, 'igd', 'full.igd', 1],
        [2, 'reddb', 'customerorder - erstudio.igg', 0], [3, 'script', 'customerorder - erstudio_erstudio.bas', 1],
        [3, '', 'customerorder - erstudio_sql2011_init.sql', 0], [3, '', 'customerorder - erstudio_sql2011_create.sql', 1],
        [3, '', 'customerorder - erstudio_sql2011_load.sql', 0], [3, '', 'customerorder - erstudio_sql2011_protect.sql', 0],
        [3, '', 'customerorder - erstudio_sql2011_access.sql', 0], [3, '', 'customerorder - erstudio_sql2011_noaccess.sql', 0],
        [3, '', 'customerorder - erstudio_sql2011_unload.sql', 0], [3, '', 'customerorder - erstudio_sql2011_drop.sql', 0]
    ];
    const arrow = '<svg class="size-[5px] mr-1"><use href="#down"/></svg>';
    const cloud = '<svg class="w-2 h-2"><use href="#cloud"/></svg>';
    const branch = '<span class="w-[6px] border-l border-b border-[#bbb] h-full -translate-y-1"></span>';
    byId('tree').innerHTML = tree.map(([depth, icon, name, bold]) => {
        const lead = depth === 0 ? cloud : depth === 1 ? arrow + cloud : icon === 'reddb' ? arrow : branch;
        const look = bold === 2 ? 'font-bold text-white bg-[#d0d0d0] pr-1' : bold ? "font-bold text-black font-['Liberation_Sans',sans-serif]" : '';
        const leadWidth = ['w-[10px]', 'w-5', 'w-[21px]', 'w-[31px]'][depth];
        return `<div class="flex items-center h-full min-h-0"><span class="flex items-center justify-end h-full shrink-0 ${leadWidth}">${lead}</span>`
            + `<span class="w-[9px] shrink-0">${icon ? `<svg class="size-2"><use href="#${icon}"/></svg>` : ''}</span><span class="ml-[2px] ${look}">${name}</span></div>`;
    }).join('');

    byId('props-list').innerHTML = [
        'File: customerorder.ig', 'Path: \\\\Mac\\Home\\Documents\\CaseTalk\\Modellen\\2020 DataVault E', '', 'State: Editable', 'Version: 43',
        'Checked out at: 29/10/2020 16:46:06', '', 'Name: customerorder.ig', '', 'Author: marcowobben', 'File format: 202101271341',
        'Created: 24/10/2020', 'Last modified: 27/01/2021'
    ].map(l => `<p>${l}</p>`).join('');

    // menus: icon, label, shortcut (">" submenu), state
    function menu(id, items, gutter) {
        byId(id).innerHTML = items.map(item => {
            if (!item) return '<div class="h-[3px] pt-px ml-[18px]"><div class="h-px bg-[#d4d4d4]"></div></div>';
            const [icon, label, key = '', state = ''] = item;
            const look = { off: 'text-[#8d8d8d]', on: 'bg-[#91c9f7]', head: 'font-bold' }[state] || 'text-[#222]';
            const right = key === '>' ? `<span class="border-y-2 border-y-transparent border-l-2 ${state === 'on' ? 'border-l-white' : 'border-l-black'} -mr-2"></span>` : `<span>${key}</span>`;
            const pic = state === 'head' ? '' : `<span class="w-[19px] shrink-0 grid place-items-center ${gutter}">${icon ? `<svg class="size-[10px] ${state === 'off' ? 'opacity-60' : ''}"><use href="#${icon}"/></svg>` : ''}</span>`;
            return `<button role="menuitem" class="flex items-center w-full h-[14px] pr-3 ${state === 'head' ? 'pl-3' : ''} ${look}">${pic}<span class="flex-1 text-left">${label}</span>${right}</button>`;
        }).join('');
    }
    menu('context-menu', [
        ['burst', 'Hide', 'Del'], ['related', 'Show Related', '', 'off'], null,
        ['cube', 'Task', '>', 'on'], null, ['', 'Go To', '>'], null,
        ['', 'Smart Move', '', 'off'], ['front', 'Bring to Front', 'Shift+Ctrl+Up'], ['back', 'Send to Back', 'Shift+Ctrl+Down'],
        ['select', 'Toggle Selection'], ['', 'Refresh', 'F5'], null,
        ['', 'Group', 'Ctrl+G', 'off'], ['', 'Ungroup', 'Shift+Ctrl+G', 'off'], null,
        ['', 'Lock', 'Ctrl+L'], ['', 'Unlock', 'Shift+Ctrl+L', 'off'], null, ['props', 'Properties']
    ], '-mr-px pr-[3px]');
    menu('task-menu', [
        ['', 'Sales::Order', '', 'head'], ['form', 'Edit', 'Ctrl+E'], ['bluelist', 'Edit Population...', 'Shift+Ctrl+E'], ['trash', 'Delete', 'Ctrl+Del'],
        ['pencil', 'Rename', 'F2'], ['', 'Replace with Object Type...'], ['', 'Delete Constraint', '>'], null,
        ['flash', 'New Expression...', 'F6'], ['obj', 'New Object Type...'], ['dashring', 'New Label Type...'], ['', 'New Subtype...'], null,
        ['objtype', 'Transform to Object Type...', '', 'off'], ['split', 'Split Label Type...', '', 'off'], ['combine', 'Combine Label Types...'],
        ['', 'Reduce Object Type'], ['', 'Expand Rolefix', '', 'off']
    ], 'pr-[5px]');

    // diagram
    const text = (x, y, s, cls) => `<text x="${x}" y="${y}" class="${cls}">${esc(s)}</text>`;
    const line = d => `<path d="${d}" fill="none" stroke="#333" stroke-width=".8"/>`;
    const label = (x, y, name, to) => line(`M${x} ${y + 8}V${to}`)
        + `<circle cx="${x}" cy="${y}" r="7.500" fill="#fff" stroke="#333" stroke-width=".8" stroke-dasharray="2 1"/>`
        + text(x, y + 3, name, 'text-[6px] fill-[#222] [text-anchor:middle]');
    const oval = (x, y, rx) => `<ellipse cx="${x}" cy="${y}" rx="${rx}" ry="11.500" fill="#ececec" stroke="#444"/>`;
    const title = (x, y, s) => text(x, y, s, 'text-[8px] fill-[#23239b] [text-anchor:middle]');
    const schema = (x, y, s) => text(x, y, s, 'text-[7px] fill-[#963096] italic');
    const dot = (x, y) => `<circle cx="${x}" cy="${y}" r="2" fill="#111"/>`;
    const roles = (x, y, nums, bars, fill = '#fff') => nums.map((n, i) =>
        `<rect x="${x + i * 21}" y="${y}" width="21" height="10" rx="1.500" fill="${fill}" stroke="#333" stroke-width=".9"/>` + text(x + 10.5 + i * 21, y + 8, n, 'text-[8px] fill-[#222] [text-anchor:middle]')
    ).join('') + bars.map(b => `<path d="M${x + 1 + b * 21} ${y - 2}h19m-2-1l2 1-2 1m-15-2l-2 1 2 1" fill="none" stroke="#222" stroke-width=".9"/>`).join('');
    const note = (x, y, s) => text(x, y, s, "text-[5px] font-['DejaVu_Sans',sans-serif] fill-[#118a11] whitespace-pre");
    const rule = (x, y, h) => `<path d="M${x} ${y}v${h}" stroke="#aaa" stroke-width=".7"/>`;
    // population rows: each starts with "n:" and has one value per column
    const rows = (x, y, cols, data) => cols.map(c => rule(c, y - 6, 6 + data.length * 6)).join('')
        + data.map((r, i) => note(x, y + i * 6.4, r[0]) + cols.map((c, k) => note(c + 1, y + i * 6.4, r[k + 1])).join('')).join('');

    byId('diagram').innerHTML = [
        line('M244 152H362M302.500 163L308 203Q308.500 205.500 311 205.500H349Q352 205.500 352.500 208L359 250L363 270'),
        line('M233 274.500H342M404 274.500H434Q436.500 274.500 436.500 272V226'),
        line('M340 365.500H373M415 364L434 361.500Q437 361 437 358V304Q437 301.500 440 301.500H502M415 367L434 370Q437 371 437 374V424'),
        line('M468 221.500H522M639 221.500H682M468 429H533M502 428.500L560 378M394 376V480Q394 482.500 397 482.500H778M670 248.500H679Q682 248.500 682 252'),
        oval(297.5, 152, 21.5), oval(212.5, 274.5, 21.5), oval(372.5, 274.5, 31.5), oval(393.5, 365, 21.5), oval(543, 221.5, 21.5),
        oval(533, 301.5, 31.5), oval(703, 221.5, 21.5), oval(778, 254, 21.5), oval(554, 429, 21.5), oval(778, 413, 21.5),
        dot(319, 152), dot(233.5, 274.5), dot(341, 274.5), dot(372, 365.5), dot(415, 366.5), dot(521.5, 221.5), dot(682, 221.5),
        '<path d="M535 481l3 1.500-3 1.500z" fill="#111"/>',

        roles(202, 147, ['35', '34'], [1]), roles(287, 147, ['3'], [0]), roles(362, 147, ['1', '2'], [0]),
        roles(202, 269.5, ['14'], [0]), roles(255, 269.5, ['13', '12'], [1]), roles(352, 269.5, ['11', '10'], [0, 1]),
        roles(298, 360.5, ['16', '15'], [1]), roles(383, 360.5, ['17'], [0]), roles(426, 216.5, ['9', '8'], [1]),
        roles(533, 216.5, ['6'], [0], '#00e5f5'), roles(597, 216.5, ['4', '5'], [0]), roles(692.5, 216.5, ['7'], [0]),
        roles(512.5, 296.5, ['23', '24'], [0, 1]), roles(426, 424, ['18', '19'], [0]), roles(767.5, 249, ['28'], [0]),
        roles(682, 477.5, ['31', '33', '32'], []),

        text(221, 95, '{ business, consumer }', 'text-[6px] fill-[#222]'),
        label(212.5, 104, 'customer_type', 147), label(297.5, 109, 'customer_code', 147), label(393.5, 114, 'customer_name', 147),
        label(383.5, 216, 'Branch_location_number', 269), label(212.5, 232, 'city_name', 269), label(308, 333, 'product_name', 360),
        label(394, 322, 'product_code', 360), label(543.5, 173, 'order_number', 216), label(703, 178.5, 'date', 216),
        label(777.5, 215.5, 'Number_of_percents', 249), label(553, 359, 'number_of_euros', 420),

        title(223, 139, 'Customer Type'), title(298, 136, 'Customer'), title(383.5, 139, 'Customer Name'), title(212.5, 262, 'City'),
        title(276.5, 262, 'Branch Location City'), title(372.5, 262, 'Branch Location'), title(319.5, 352.5, 'Product Name'),
        title(394, 352.5, 'Product'), title(447, 208.5, 'Order Destination'), title(543, 206, 'Order'), title(618, 208.5, 'Order Date'),
        title(703, 208.5, 'Day'), title(661, 240.5, 'Order Line Discount'), title(778, 240.5, 'Percentage'), title(533, 285.5, 'Order Line'),
        title(447, 417, 'Product Price'), title(554, 417, 'Amount of Money'),
        schema(280, 127, 'pipo'), schema(533, 196, 'Sales'), schema(513, 276, 'Sales'),

        note(191, 165, 'F13 : "<34>is a <35>."'), rows(194, 175, [202, 222], [['1:', 'business', 'VD']]),
        note(276, 171, "O1 : 'customer <3>'"), rows(278, 181, [287], [['1:', 'VD']]),
        note(352, 165, 'F1 : "<1> is called <2>."'), rows(354, 175, [362, 383], [['1:', 'VD', 'Vroom e...']]),
        note(191, 294, "O5 : '<14>'"), rows(193, 304, [202], [['1:', 'Amsterd...'], ['2:', 'Marseille'], ['3:', 'Berlin']]),
        note(245, 288, 'F5 : "<12> is located in'), note(257, 294, '<13>."'), rows(247, 304, [255, 276], [['1:', 'Marseille', '1,VD']]),
        note(341, 294, 'F4 : "<11> has a branch location with'), note(353, 300, 'number <10>."'), note(341, 306, "O4 : 'branch location <10> of <11>'"),
        rows(343, 317, [352, 372], [['1:', 'VD', '1']]),
        note(288, 379, 'F6 : "The name of <15> is'), note(299, 385, '<16>."'), rows(290, 395, [298, 319], [['1:', 'Tent', 'TD4']]),
        note(372, 385, "O6 : 'product <17>'"), note(372, 391, "O9 : '<17>'"), rows(375, 401, [383], [['1:', 'TD4']]),
        note(415, 235, 'F3 : "<8> must be delivered'), note(427, 241, 'at <9>."'), rows(418, 250.5, [426, 447], [['1:', '1,VD', '123']]),
        note(522, 241, "O2 : 'order <6>'"), rows(524, 251, [533], [['1:', '123']]),
        note(683, 241, "O3 : '<7>'"), rows(684, 251, [692], [['1:', '2010/10/...']]),
        note(501, 320.5, 'O8 : "<23> on <24>"'), rows(503, 330, [512, 532], [['1:', 'TD4', '123']]),
        note(415, 442.5, 'F7 : "The price of <18> is'), note(427, 448.5, 'usually <19>."'), rows(418, 458.5, [426, 447], [['1:', 'TD4', '16']]),
        note(533, 448.5, "O7   : '<20> euro'"), note(533, 454.5, "O10 : '<20>'"),
        rows(534, 465, [543], [['1:', '200'], ['2:', '540'], ['3:', '12'], ['4:', '16']]),
        note(608, 442.5, 'F8 : "The turnover of <21> is'), note(619, 448.5, '<22>."'), rows(610, 458.5, [618, 639], [['1:', '12', 'TD4,123']]),
        note(672, 495.5, 'F12 : "The number of items in stock of'), note(696, 501.5, '<31> in <32> is <33>."'),
        rows(674, 511.5, [682, 703, 724], [['1:', 'TD4', '45', 'Alha...']]),
        note(797, 432.5, 'a ware'), note(797, 444.5, 'e <30'), text(797, 362, 'ne', 'text-[6px] fill-[#222]'),

        // annotations beside concepts
        '<circle cx="319" cy="142" r="3.200" fill="#fff" stroke="#777" stroke-width=".8"/><path d="M317 142h4M319 140v4" stroke="#e0602c"/>',
        '<path d="M325.500 145.500q0-2.500 2-2.500-1-1-1-2.200 0-1.800 1.800-1.800t1.800 1.800q0 1.200-1 2.200 2 0 2 2.500z" fill="#fff" stroke="#666" stroke-width=".8"/>',
        '<use href="#checkball" x="230" y="261" width="7" height="7"/>',
        '<path d="M401.500 264.500l6-3-2.500 6-.8-2.700z" fill="#fff" stroke="#333" stroke-width=".8"/>',
        '<circle cx="318" cy="322.500" r="3.300" fill="#fff" stroke="#222"/><path d="M315 322.500h6M318 319v7M316 320.500h4M316 324.500h4M319 325l2 2" stroke="#222" stroke-width=".7"/>',
        '<path d="M406 140v3M405 141l1-1.500 1 1.500M409 142h2l-1.500 4" fill="none" stroke="#a3653a" stroke-width=".8"/>',
        '<path d="M471 417v3M470 418l1-1.500 1 1.500M473.500 419h2l-1.500 4" fill="none" stroke="#a3653a" stroke-width=".8"/>',
        '<path d="M797 398l5 8" stroke="#c8a010" stroke-width="2"/><path d="M796 400l3-2" stroke="#24b" stroke-width="1.500"/>',
        '<use href="#blueball" x="805" y="400" width="7" height="7"/>'
    ].join('');
    </script>
</body>
</html>
